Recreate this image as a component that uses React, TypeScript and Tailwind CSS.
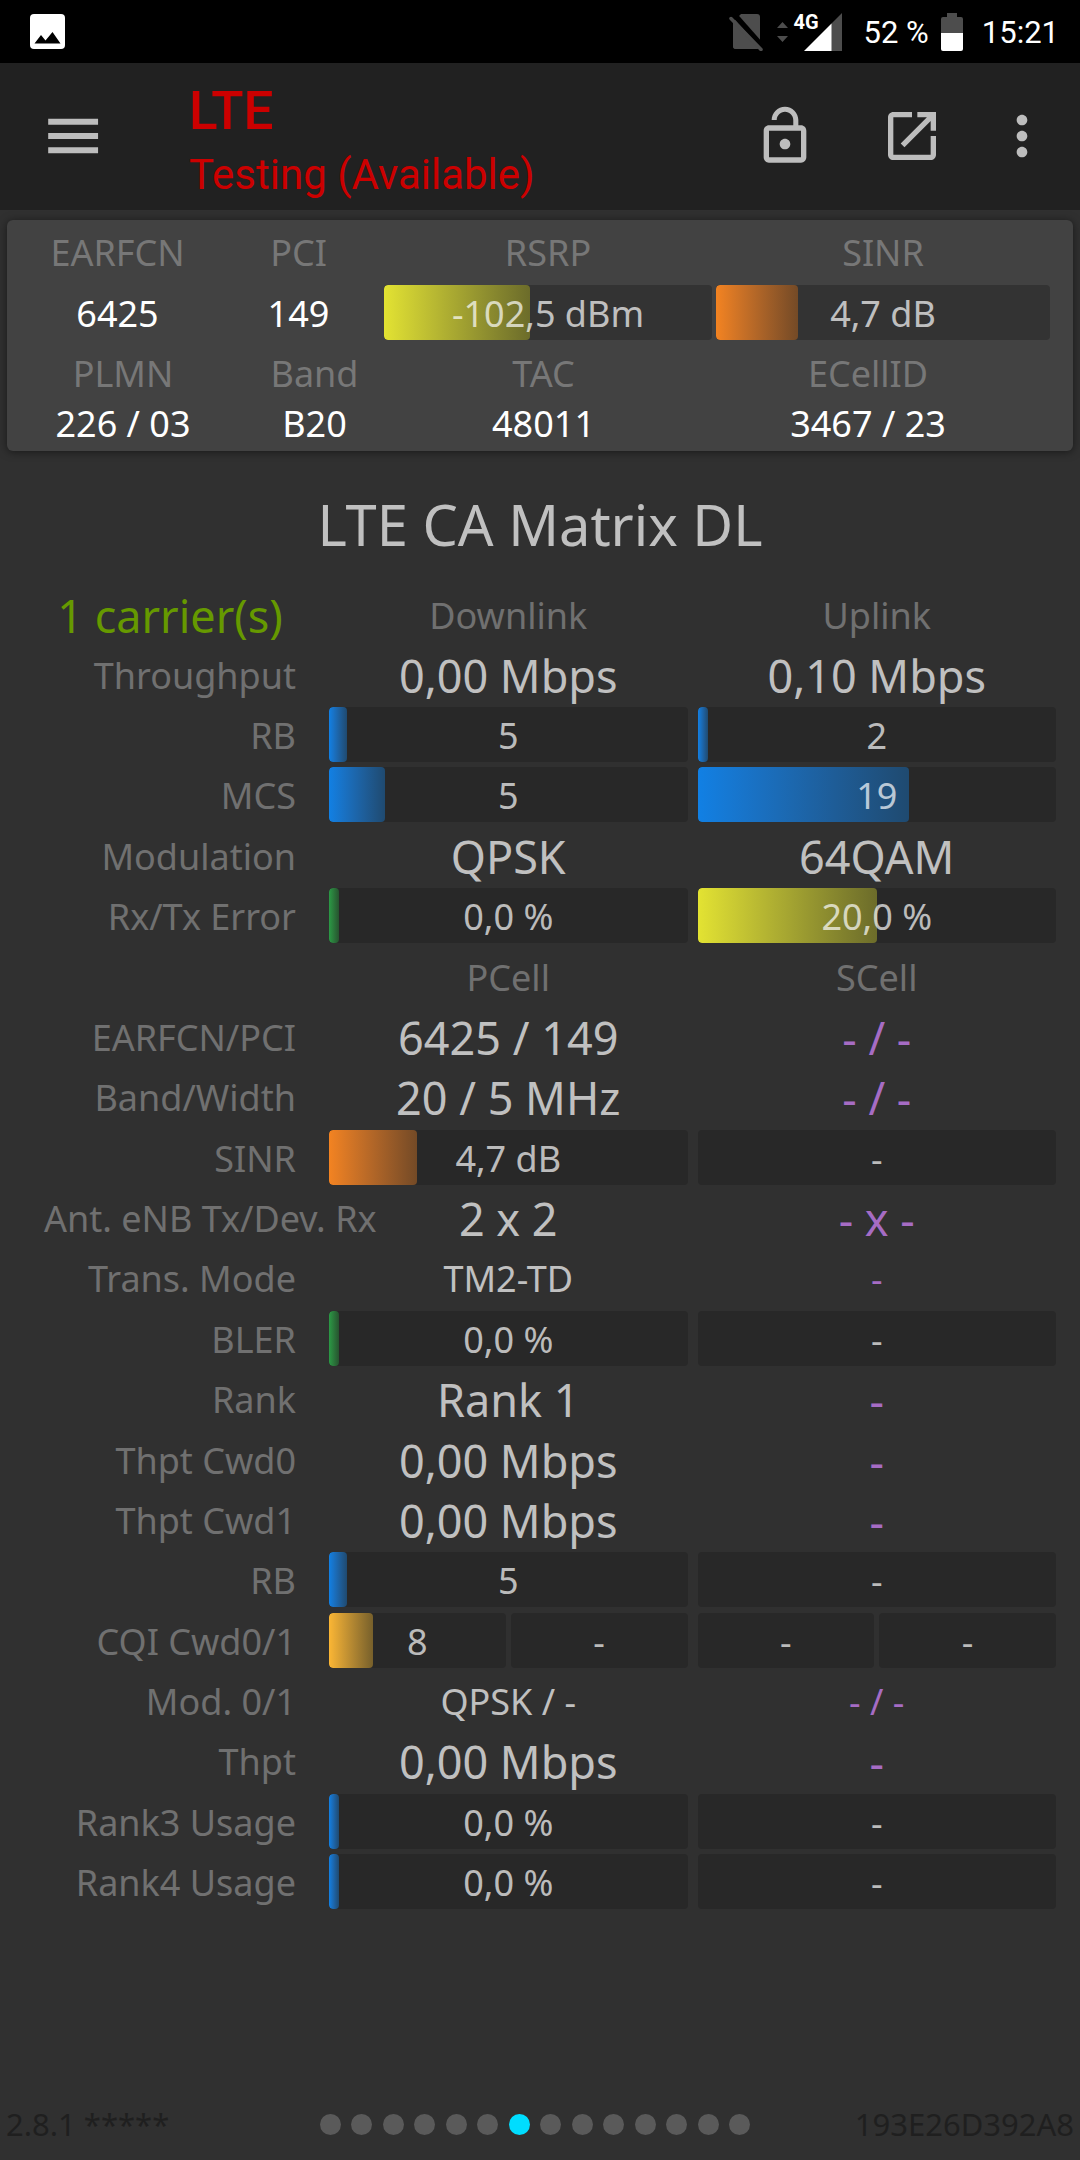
import { useState } from 'react';
import type { ReactNode } from 'react';

type Tone = 'blue' | 'green' | 'yellow' | 'orange' | 'amber';

interface BarData {
  text: string;
  tone?: Tone;
  fill?: number;
}

type Cell =
  | { kind: 'head' | 'big' | 'small' | 'bigNone' | 'smallNone'; text: string }
  | { kind: 'bars'; bars: BarData[] };

interface Row {
  label: string;
  cells: [Cell, Cell];
}

const tones: Record<Tone, string> = {
  blue: 'from-[#1180e4] to-[#1f4a70]',
  green: 'from-[#2a9a45] to-[#26532f]',
  yellow: 'from-[#e3e332] to-[#6c6c2a]',
  orange: 'from-[#f38321] to-[#744a26]',
  amber: 'from-[#fbb634] to-[#77602b]',
};

const head = (text: string): Cell => ({ kind: 'head', text });
const big = (text: string): Cell => ({ kind: 'big', text });
const small = (text: string): Cell => ({ kind: 'small', text });
const bigNone = (text = '-'): Cell => ({ kind: 'bigNone', text });
const smallNone = (text = '-'): Cell => ({ kind: 'smallNone', text });
const bar = (text: string, tone?: Tone, fill?: number): Cell => ({
  kind: 'bars',
  bars: [{ text, tone, fill }],
});

const rows: Row[] = [
  { label: 'Throughput', cells: [big('0,00 Mbps'), big('0,10 Mbps')] },
  { label: 'RB', cells: [bar('5', 'blue', 5), bar('2', 'blue', 2)] },
  { label: 'MCS', cells: [bar('5', 'blue', 15.5), bar('19', 'blue', 59)] },
  { label: 'Modulation', cells: [big('QPSK'), big('64QAM')] },
  { label: 'Rx/Tx Error', cells: [bar('0,0 %', 'green', 0), bar('20,0 %', 'yellow', 50)] },
  { label: '', cells: [head('PCell'), head('SCell')] },
  { label: 'EARFCN/PCI', cells: [big('6425 / 149'), bigNone('- / -')] },
  { label: 'Band/Width', cells: [big('20 / 5 MHz'), bigNone('- / -')] },
  { label: 'SINR', cells: [bar('4,7 dB', 'orange', 24.5), bar('-')] },
  { label: 'Ant. eNB Tx/Dev. Rx', cells: [big('2 x 2'), bigNone('- x -')] },
  { label: 'Trans. Mode', cells: [small('TM2-TD'), smallNone()] },
  { label: 'BLER', cells: [bar('0,0 %', 'green', 0), bar('-')] },
  { label: 'Rank', cells: [big('Rank 1'), bigNone()] },
  { label: 'Thpt Cwd0', cells: [big('0,00 Mbps'), bigNone()] },
  { label: 'Thpt Cwd1', cells: [big('0,00 Mbps'), bigNone()] },
  { label: 'RB', cells: [bar('5', 'blue', 5), bar('-')] },
  {
    label: 'CQI Cwd0/1',
    cells: [
      { kind: 'bars', bars: [{ text: '8', tone: 'amber', fill: 25 }, { text: '-' }] },
      { kind: 'bars', bars: [{ text: '-' }, { text: '-' }] },
    ],
  },
  { label: 'Mod. 0/1', cells: [small('QPSK / -'), smallNone('- / -')] },
  { label: 'Thpt', cells: [big('0,00 Mbps'), bigNone()] },
  { label: 'Rank3 Usage', cells: [bar('0,0 %', 'blue', 0), bar('-')] },
  { label: 'Rank4 Usage', cells: [bar('0,0 %', 'blue', 0), bar('-')] },
];

const textStyles = {
  head: 'text-[36px] text-[#707070]',
  big: 'text-[45px] text-[#c0c0c0]',
  small: 'text-[36px] text-[#c0c0c0]',
  bigNone: 'text-[45px] text-[#a66cc4]',
  smallNone: 'text-[36px] text-[#a66cc4]',
};

function Bar({ text, tone, fill = 0, track = 'bg-[#282828]' }: BarData & { track?: string }) {
  return (
    <div className={`relative h-[55px] flex-1 overflow-hidden rounded ${track}`}>
      {/* an empty value still shows a thin strip */}
      {tone && (
        <div
          className={`absolute inset-y-0 left-0 min-w-[10px] rounded bg-linear-to-r ${tones[tone]}`}
          style={{ width: `${fill}%` }}
        />
      )}
      <span className="relative block text-center text-[36px] leading-[57px] text-white/70">{text}</span>
    </div>
  );
}

function Metric({ label, children }: { label: string; children: ReactNode }) {
  return (
    <div className="text-center text-[36px] text-white">
      <dt className="text-[#777777]">{label}</dt>
      {children}
    </div>
  );
}

function StatusBar() {
  return (
    <div className="flex h-[63px] items-center bg-black pl-[30px] pr-[21px] text-[31px] text-white">
      <svg width="35" height="35" viewBox="0 0 35 35" aria-hidden="true">
        <rect width="35" height="35" rx="4" fill="#fff" />
        <path d="M4.500 29.500l6.500-8.500 4.500 5.500 7-8.500 8 11.500z" fill="#000" />
      </svg>
      <svg className="ml-auto" width="34" height="38" viewBox="0 0 34 38" aria-hidden="true">
        <path d="M12 1h16a3 3 0 0 1 3 3v29a3 3 0 0 1-3 3H7a3 3 0 0 1-3-3V9z" fill="#4d4d4d" />
        <path d="M0 0h7.500L34 30v8z" fill="#000" />
        <path d="M4 8.500L29 36H7a3 3 0 0 1-3-3z" fill="#4d4d4d" />
        <path d="M2 5.500l30 31" stroke="#4d4d4d" strokeWidth="3.500" strokeLinecap="round" />
      </svg>
      <svg className="ml-3.5" width="11" height="20" viewBox="0 0 11 20" aria-hidden="true">
        <path d="M5.500 0L11 6H0zM0 14h11l-5.500 6z" fill="#4d4d4d" />
      </svg>
      <div className="relative ml-4 h-[38px] w-[38px]">
        <svg width="38" height="38" viewBox="0 0 38 38" aria-hidden="true">
          <path d="M38 0v38H27V11z" fill="#4d4d4d" />
          <path d="M27.500 10.500V38H0z" fill="#fff" />
        </svg>
        <span className="absolute -left-[10px] -top-px text-[20px] font-bold leading-5">4G</span>
      </div>
      <span className="ml-[22px] pt-1">52 %</span>
      <svg className="ml-3" width="22" height="38" viewBox="0 0 22 38" aria-hidden="true">
        <path d="M6 0h10v4h4a2 2 0 0 1 2 2v14H0V6a2 2 0 0 1 2-2h4z" fill="#4d4d4d" />
        <path d="M0 20h22v16a2 2 0 0 1-2 2H2a2 2 0 0 1-2-2z" fill="#fff" />
      </svg>
      <span className="ml-[19px] pt-1">15:21</span>
    </div>
  );
}

function IconButton({ label, path, className = '' }: { label: string; path: string; className?: string }) {
  return (
    <button aria-label={label} className={`h-16 w-16 shrink-0 text-[#bdbdbd] ${className}`}>
      <svg className="h-full w-full" viewBox="0 0 24 24" fill="currentColor" aria-hidden="true">
        <path d={path} />
      </svg>
    </button>
  );
}

function AppHeader() {
  return (
    <header className="flex h-[147px] items-center bg-[#212121] pb-0.5 pl-[41px] pr-[26px]">
      <IconButton label="Menu" path="M2.700 5.550h18.700v2.200H2.700zM2.700 10.900h18.700v2.200H2.700zM2.700 16.250h18.700v2.200H2.700z" />
      <div className="ml-[84px] flex-1 pt-3.5 text-[#cc0000]">
        <h1 className="text-[53px] font-medium leading-16">LTE</h1>
        <p className="text-[42px] leading-16">Testing (Available)</p>
      </div>
      <IconButton
        label="Unlock"
        path="M12 17c1.100 0 2-.9 2-2s-.9-2-2-2-2 .9-2 2 .9 2 2 2zm6-9h-1V6c0-2.760-2.240-5-5-5S7 3.240 7 6h1.900c0-1.710 1.390-3.100 3.100-3.100s3.100 1.390 3.100 3.100v2H6c-1.100 0-2 .9-2 2v10c0 1.100.9 2 2 2h12c1.100 0 2-.9 2-2V10c0-1.100-.9-2-2-2zm0 12H6V10h12v10z"
      />
      <IconButton
        label="Open in window"
        className="ml-[63px]"
        path="M19 19H5V5h7V3H5c-1.110 0-2 .9-2 2v14c0 1.100.89 2 2 2h14c1.100 0 2-.9 2-2v-7h-2v7zM14 3v2h3.590l-9.830 9.830 1.410 1.410L19 6.410V10h2V3h-7z"
      />
      <IconButton
        label="More options"
        className="ml-[46px]"
        path="M12 8c1.100 0 2-.9 2-2s-.9-2-2-2-2 .9-2 2 .9 2 2 2zm0 2c-1.100 0-2 .9-2 2s.9 2 2 2 2-.9 2-2-.9-2-2-2zm0 6c-1.100 0-2 .9-2 2s.9 2 2 2 2-.9 2-2-.9-2-2-2z"
      />
    </header>
  );
}

function CellSummary() {
  return (
    <section className="mx-[7px] mt-2.5 rounded-md bg-[#424242] pb-[9px] pl-[13px] pr-[21px] pt-px shadow-[0_1px_8px_rgba(0,0,0,0.5)]">
      <dl className="grid grid-cols-[195fr_167fr_332fr_338fr] leading-16">
        <Metric label="EARFCN">
          <dd className="leading-[57px]">6425</dd>
        </Metric>
        <Metric label="PCI">
          <dd className="leading-[57px]">149</dd>
        </Metric>
        <Metric label="RSRP">
          <dd className="px-0.5">
            <Bar text="-102,5 dBm" tone="yellow" fill={44.5} track="bg-[#333333]" />
          </dd>
        </Metric>
        <Metric label="SINR">
          <dd className="px-0.5">
            <Bar text="4,7 dB" tone="orange" fill={24.5} track="bg-[#333333]" />
          </dd>
        </Metric>
      </dl>
      <dl className="grid grid-cols-[206fr_177fr_281fr_368fr] leading-16">
        <Metric label="PLMN">
          <dd className="leading-9">226 / 03</dd>
        </Metric>
        <Metric label="Band">
          <dd className="leading-9">B20</dd>
        </Metric>
        <Metric label="TAC">
          <dd className="leading-9">48011</dd>
        </Metric>
        <Metric label="ECellID">
          <dd className="leading-9">3467 / 23</dd>
        </Metric>
      </dl>
    </section>
  );
}

function ValueCell({ cell }: { cell: Cell }) {
  if (cell.kind === 'bars') {
    return (
      <td className="px-[5px] py-0">
        <div className="flex gap-[5px]">
          {cell.bars.map((item, i) => (
            <Bar key={i} {...item} />
          ))}
        </div>
      </td>
    );
  }
  return <td className={`pb-0 pt-0.5 text-center leading-[55px] ${textStyles[cell.kind]}`}>{cell.text}</td>;
}

function CarrierTable() {
  return (
    <table className="h-[1328px] w-full table-fixed">
      <thead>
        <tr className="h-[60px]">
          <th className="w-[324px] pb-0 pl-[44px] pr-[28px] pt-0.5 text-center text-[45px] font-normal leading-[55px] whitespace-nowrap text-[#669900]">
            1 carrier(s)
          </th>
          <th className="pb-0 pt-0.5 text-[36px] font-normal leading-[55px] text-[#707070]">Downlink</th>
          <th className="pb-0 pt-0.5 text-[36px] font-normal leading-[55px] text-[#707070]">Uplink</th>
        </tr>
      </thead>
      <tbody>
        {rows.map((row, i) => (
          <tr key={i} className="h-[60px]">
            <th
              scope="row"
              className="pb-0 pl-[44px] pr-[28px] pt-0.5 text-[36px] font-normal leading-[55px] whitespace-nowrap text-[#707070]"
            >
              {/* long labels start at the left edge and run into the next column */}
              <div className="flex justify-end">
                <span className="min-w-0 max-w-full">{row.label}</span>
              </div>
            </th>
            <ValueCell cell={row.cells[0]} />
            <ValueCell cell={row.cells[1]} />
          </tr>
        ))}
      </tbody>
    </table>
  );
}

function Footer() {
  const [page, setPage] = useState(6);

  return (
    <footer className="mt-auto grid grid-cols-[1fr_auto_1fr] items-center px-1.5 pb-2.5 text-[31px] leading-[52px] text-[#1f1f1f]">
      <span>2.8.1 *****</span>
      <nav className="flex w-[441px] justify-between pr-2.5">
        {Array.from({ length: 14 }, (_, i) => (
          <button
            key={i}
            aria-label={`Page ${i + 1}`}
            onClick={() => setPage(i)}
            className={`size-[21px] rounded-full ${i === page ? 'bg-[#00ddff]' : 'bg-[#5a5a5a]'}`}
          />
        ))}
      </nav>
      <span className="text-right">193E26D392A8</span>
    </footer>
  );
}

export default function App() {
  return (
    <div className="flex min-h-screen flex-col bg-[#303030] font-['Noto_Sans',sans-serif]">
      <div className="font-['Roboto',sans-serif]">
        <StatusBar />
        <AppHeader />
      </div>
      <CellSummary />
      <main className="pr-[19px]">
        <h2 className="mb-7 mt-[41px] pl-[19px] text-center text-[56px] leading-16 text-[#c0c0c0]">LTE CA Matrix DL</h2>
        <CarrierTable />
      </main>
      <Footer />
    </div>
  );
}
